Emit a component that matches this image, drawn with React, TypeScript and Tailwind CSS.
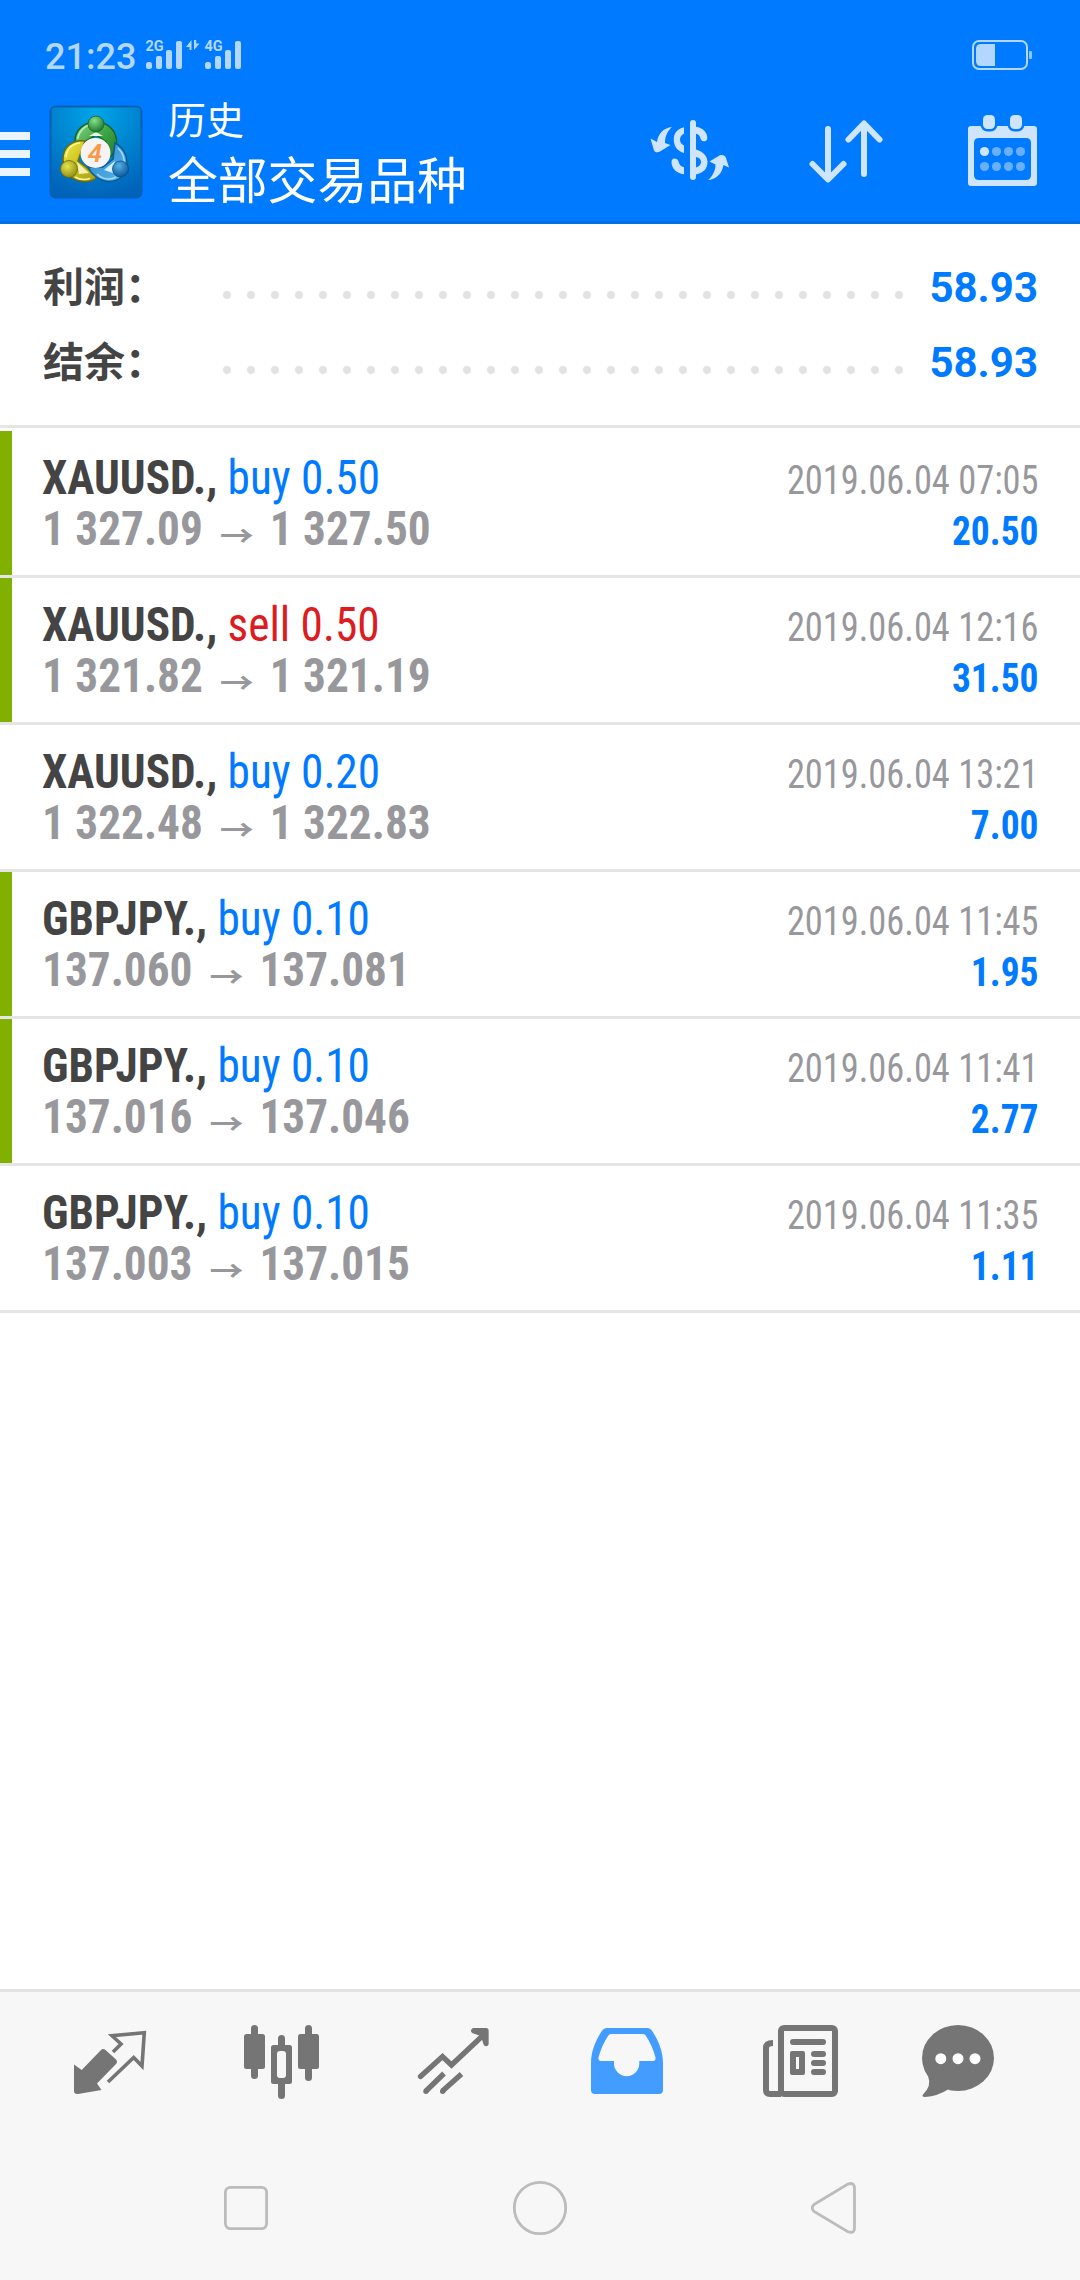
import type { ReactNode } from "react";

type Deal = {
  symbol: string;
  side: "buy" | "sell";
  volume: string;
  open: string;
  close: string;
  time: string;
  profit: string;
  marked: boolean;
};

const DEALS: Deal[] = [
  { symbol: "XAUUSD.", side: "buy", volume: "0.50", open: "1 327.09", close: "1 327.50", time: "2019.06.04 07:05", profit: "20.50", marked: true },
  { symbol: "XAUUSD.", side: "sell", volume: "0.50", open: "1 321.82", close: "1 321.19", time: "2019.06.04 12:16", profit: "31.50", marked: true },
  { symbol: "XAUUSD.", side: "buy", volume: "0.20", open: "1 322.48", close: "1 322.83", time: "2019.06.04 13:21", profit: "7.00", marked: false },
  { symbol: "GBPJPY.", side: "buy", volume: "0.10", open: "137.060", close: "137.081", time: "2019.06.04 11:45", profit: "1.95", marked: true },
  { symbol: "GBPJPY.", side: "buy", volume: "0.10", open: "137.016", close: "137.046", time: "2019.06.04 11:41", profit: "2.77", marked: true },
  { symbol: "GBPJPY.", side: "buy", volume: "0.10", open: "137.003", close: "137.015", time: "2019.06.04 11:35", profit: "1.11", marked: false },
];

const SUMMARY = [
  { label: "利润：", value: "58.93" },
  { label: "结余：", value: "58.93" },
];

function Signal({ label }: { label: string }) {
  return (
    <svg width="38" height="32" viewBox="0 0 38 32" fill="#b3d7ff">
      <text x="0.500" y="12" fontSize="14.500" fontWeight="700" fontFamily="Roboto, sans-serif">
        {label}
      </text>
      <rect x="1" y="23" width="6" height="7" rx="2.5" />
      <rect x="11" y="17" width="6" height="13" rx="2" />
      <rect x="21" y="11" width="6" height="19" rx="2" />
      <rect x="31" y="2" width="6" height="28" rx="2" />
    </svg>
  );
}

function StatusBar() {
  return (
    <div className="flex h-[92px] items-start pl-[45px] pr-[48px] pt-[36px] text-[#b3d7ff]">
      <span className="h-9 w-[100px] text-[36px] leading-[42px] font-medium">21:23</span>
      <div className="mt-[3px] flex">
        <Signal label="2G" />
        <svg className="ml-[3px]" width="16" height="32" viewBox="0 0 16 32" fill="#b3d7ff">
          <path d="M5.5 1v10H3.5V8H0l5.5-7zM8 1h2.200v3.500H13.500L8 11z" />
        </svg>
        <div className="ml-[2px]">
          <Signal label="4G" />
        </div>
      </div>
      <svg className="ml-auto mt-[4px]" width="60" height="30" viewBox="0 0 60 30">
        <rect x="1" y="1" width="54" height="28" rx="6" fill="none" stroke="#b3d7ff" strokeWidth="2" />
        <path d="M23 4v22H9q-5 0-5-5V9q0-5 5-5z" fill="#b3d7ff" />
        <rect x="57" y="11" width="3" height="8" rx="1" fill="#8cc6ff" />
      </svg>
    </div>
  );
}

function Logo() {
  return (
    <svg width="94" height="94" viewBox="0 0 94 94">
      <defs>
        <radialGradient id="tile" cx="50%" cy="8%" r="95%">
          <stop offset="0" stopColor="#00a5e8" />
          <stop offset="0.55" stopColor="#0080cd" />
          <stop offset="1" stopColor="#0062b8" />
        </radialGradient>
        <linearGradient id="green" x1="0" y1="0" x2="1" y2="1">
          <stop offset="0" stopColor="#8fd68a" />
          <stop offset="0.5" stopColor="#3ea645" />
          <stop offset="1" stopColor="#1e7a2c" />
        </linearGradient>
        <linearGradient id="yellow" x1="0" y1="0" x2="1" y2="1">
          <stop offset="0" stopColor="#f6ec4a" />
          <stop offset="0.5" stopColor="#c9c01c" />
          <stop offset="1" stopColor="#a8a014" />
        </linearGradient>
        <linearGradient id="blue" x1="0" y1="0" x2="1" y2="1">
          <stop offset="0" stopColor="#2a84c4" />
          <stop offset="1" stopColor="#58b8ee" />
        </linearGradient>
        <radialGradient id="ballGreen" cx="40%" cy="30%" r="70%">
          <stop offset="0" stopColor="#8ae08a" />
          <stop offset="1" stopColor="#1d7a30" />
        </radialGradient>
        <radialGradient id="ballYellow" cx="40%" cy="35%" r="70%">
          <stop offset="0" stopColor="#e8e44e" />
          <stop offset="1" stopColor="#8c8a10" />
        </radialGradient>
        <radialGradient id="ballBlue" cx="40%" cy="30%" r="70%">
          <stop offset="0" stopColor="#58b0e4" />
          <stop offset="1" stopColor="#0b5a9c" />
        </radialGradient>
      </defs>
      <rect x="1.500" y="1.500" width="91" height="91" rx="5" fill="url(#tile)" stroke="#0560b4" strokeWidth="2" />
      {/* upper arm */}
      <path d="M26 36C26 25 35 17 47 17C59 17 68 26 67.500 38C67 46 64 50 60 53L57 37L47 30L36 37L27 40Z" fill="url(#green)" stroke="#17642a" strokeWidth="1.500" />
      <path d="M28.500 34C30 26 36 20.500 42 19.500" fill="none" stroke="#b8ecae" strokeWidth="1.500" />
      <path d="M40 31L47 27L54 31Z" fill="#e4f7e0" />
      {/* left arm */}
      <path d="M36 36C24 34 14 42 14 54C14 68 24 77 38 76.500C43 76 46 74 48 72L37 62L29 56L33 44Z" fill="url(#yellow)" stroke="#6f6a12" strokeWidth="1.500" />
      <path d="M17 52C18 43 24 38.500 31 38M26 72C31 75 36 75 41 73.500" fill="none" stroke="#fbf79c" strokeWidth="1.500" />
      <path d="M28 57L40 68L30 69Z" fill="#f4f3b0" />
      {/* right arm */}
      <path d="M66 38C74 42 78 50 78 58C78 70 69 77 59 76.500C50 76 42 69 39 62L54 62L64 54Z" fill="url(#blue)" stroke="#0e5a98" strokeWidth="1.500" />
      <path d="M69 43C74 48 76 54 75 60M48 69C54 75 62 75 67 72" fill="none" stroke="#a6dcfa" strokeWidth="1.500" />
      <path d="M55 65L66 56L64 68Z" fill="#d6effc" />
      <circle cx="47" cy="19" r="8" fill="url(#ballGreen)" stroke="#17642a" strokeWidth="0.800" />
      <circle cx="20" cy="64" r="8.500" fill="url(#ballYellow)" stroke="#6f6a12" strokeWidth="0.800" />
      <circle cx="71.500" cy="64" r="8" fill="url(#ballBlue)" stroke="#0b4f88" strokeWidth="0.800" />
      <circle cx="46.500" cy="48" r="15" fill="#f6f4f3" />
      <text x="46" y="57" textAnchor="middle" fontSize="26" fontWeight="600" fontStyle="italic" fontFamily="Roboto, sans-serif" fill="#f59a4a">
        4
      </text>
    </svg>
  );
}

function AppBar() {
  return (
    <div className="flex h-[132px] items-start border-b-3 border-[#0070e6]">
      <div className="mt-[40px] flex w-[30px] flex-col gap-[10px]">
        <span className="h-2 bg-[#eaf4ff]" />
        <span className="h-2 bg-[#eaf4ff]" />
        <span className="h-2 bg-[#eaf4ff]" />
      </div>
      <div className="ml-[19px] mt-[13px]">
        <Logo />
      </div>
      <div className="ml-[25px] text-white">
        <div className="mt-[4px] h-[50px] text-[38px] leading-[50px]">历史</div>
        <div className="mt-[6px] h-[60px] text-[49.800px] leading-[60px]">全部交易品种</div>
      </div>
      <div className="ml-auto flex">
        <svg width="120" height="129" viewBox="630 92 120 129" fill="#cfe4fd">
          <rect x="690" y="120" width="6" height="60" rx="3" />
          <path d="M684 127.200C677 128.500 673.800 133.500 673.800 139.500C673.800 146.500 677.500 151 684 153V145.500C681 144 680 142 680 139.500C680 137 681.500 134.800 684 133.800Z" />
          <path d="M696 126.800C703 128 707.300 132.500 707.300 138C707.300 142.500 701.500 142.300 700.500 138.500C699.800 135.500 698.500 134.500 696 133.800Z" />
          <path fillRule="evenodd" d="M696 149.500C703.500 151.500 707.500 156.500 707.500 162C707.500 168.500 703.500 173 696 174.500ZM696 157V167.500C699.500 166.500 701 164.500 701 162C701 159.500 699.500 157.800 696 157Z" />
          <path d="M684 174.300C676 173 671.500 168 671.500 162C671.500 157.500 677.500 157.500 678.500 161.500C679.300 165 681 166.500 684 167.300Z" />
          <path d="M672 127C663 128 658 134 657 142L650.500 138.500L654 150.500C655.500 153 658 152.500 660 151.500L670.500 145L665 143C665 136 667.500 131 672 127Z" />
          <path d="M708 180C717 179 722 173.500 723.500 165L729 167.500L726 158C725 155 722 154.500 719.500 155.500L709.500 161.500L715.500 164.500C715.500 170 713 176 708 180Z" />
        </svg>
        <svg className="ml-[30px]" width="120" height="129" viewBox="780 92 120 129" fill="none" stroke="#cfe4fd" strokeWidth="6" strokeLinecap="round" strokeLinejoin="round">
          <path d="M828 129v50M812.500 164l15.500 15.500 15.500-15.500M864 174v-50M848.500 139.500L864 123.500 879.500 139.500" />
        </svg>
        <svg className="ml-[30px]" width="150" height="129" viewBox="930 92 150 129" fill="#cfe4fd">
          <path fillRule="evenodd" d="M973 126h61q3 0 3 3v54q0 3-3 3h-63q-3 0-3-3v-54q0-3 3-3zM979 138q-5 0-5 5v32q0 5 5 5h47q5 0 5-5v-32q0-5-5-5z" />
          <rect x="983" y="115" width="12" height="14" rx="4.500" stroke="#007aff" strokeWidth="5" paintOrder="stroke" />
          <rect x="1010" y="115" width="12" height="14" rx="4.500" stroke="#007aff" strokeWidth="5" paintOrder="stroke" />
          {[984.5, 996.5, 1008.5, 1020.5].map((x, i) => (
            <g key={x}>
              <circle cx={x} cy="151.500" r="4.600" opacity={i === 0 ? 1 : 0.5} />
              <circle cx={x} cy="166.500" r="4.600" opacity="0.500" />
            </g>
          ))}
        </svg>
      </div>
    </div>
  );
}

function SummaryRow({ label, value }: { label: string; value: string }) {
  return (
    <div className="flex h-[75px] items-center pl-[43px] pr-[42px] font-bold">
      <span className="w-[180px] pt-[4px] text-[41px] leading-[71px] text-[#444]">{label}</span>
      <div className="mt-[17px] flex gap-4">
        {Array.from({ length: 29 }, (_, i) => (
          <span key={i} className="size-2 rounded-full bg-[#e3e3e3]" />
        ))}
      </div>
      <span className="ml-auto pt-[3px] text-[42px] leading-[72px] text-[#007aff]">{value}</span>
    </div>
  );
}

function DealRow({ deal }: { deal: Deal }) {
  return (
    <div className="flex h-[147px] border-b-3 border-[#e5e5e5] [font-stretch:75%]">
      <div className={`w-3 ${deal.marked ? "bg-[#80b000]" : ""}`} />
      <div className="ml-[30px] origin-left scale-x-[0.943] pt-[21px] text-[48px] leading-[51px] whitespace-nowrap">
        <div className="h-[51px]">
          <span className="font-bold text-[#444]">{deal.symbol},</span>{" "}
          <span className={`font-[450] ${deal.side === "buy" ? "text-[#007aff]" : "text-[#dd1c22]"}`}>
            {deal.side} {deal.volume}
          </span>
        </div>
        <div className="flex h-[51px] font-bold text-[#98989c]">
          <span>{deal.open}</span>
          <span className="ml-[18px] mr-[17px] mt-[7px] scale-y-[0.8] font-['Noto_Sans_CJK_SC'] text-[36px]">→</span>
          <span>{deal.close}</span>
        </div>
      </div>
      <div className="ml-auto pr-[41px] pt-[24px] text-right text-[40px] leading-[51px]">
        <div className="origin-right scale-x-[0.91] font-[430] text-[#98989c]">{deal.time}</div>
        <div className="origin-right scale-x-[0.937] font-bold text-[#007aff]">{deal.profit}</div>
      </div>
    </div>
  );
}

function Tab({ children, active }: { children: ReactNode; active?: boolean }) {
  return (
    <button type="button" className={`flex-1 ${active ? "text-[#439cff]" : "text-[#757575]"}`}>
      <svg width="180" height="146" viewBox="0 0 180 146" fill="currentColor">
        {children}
      </svg>
    </button>
  );
}

function TabBar() {
  return (
    <div className="flex h-[149px] border-t-3 border-[#e3e3e3]">
      <Tab>
        <path d="M74 72.500L81.700 78L100.500 58.500Q103 56 105.500 58L116 67.500Q118 70 116 72L97 91.500L101.500 98L78 102Q74 102.500 74 99Z" />
        <path d="M113 60L121 52L112 43.700L144.300 40.700L142 74L133.700 65.500L108 90" fill="none" stroke="currentColor" strokeWidth="3.600" />
      </Tab>
      <Tab>
        <rect x="64" y="42" width="21" height="35" rx="2.500" />
        <rect x="71" y="33" width="7" height="54" rx="3.500" />
        <rect x="98" y="43" width="7" height="64" rx="3.500" />
        <rect x="91" y="53" width="21" height="39" rx="2.500" />
        <rect x="97" y="59" width="9" height="27" rx="3" fill="#f7f7f7" />
        <rect x="118" y="42" width="21" height="35" rx="2.500" />
        <rect x="125" y="33" width="7" height="56" rx="3.500" />
      </Tab>
      <Tab>
        <g fill="none" stroke="currentColor" strokeWidth="5.300">
          <path d="M60.500 84.500L82.500 64.500L91.500 73L125 41.500" strokeLinecap="round" />
          <path d="M113.700 38.700H126V51.500L123 42Z" strokeLinecap="round" strokeLinejoin="round" />
          <path d="M66 99L84 81.500M82.500 99L101.500 82" />
        </g>
        <circle cx="66" cy="99.300" r="2.700" />
        <circle cx="82.700" cy="99.300" r="2.700" />
      </Tab>
      <Tab active>
        <path fillRule="evenodd" d="M67 36H107Q110.500 36 112.500 39.500C119 49.500 123 60 123 71V98Q123 102 119 102H55Q51 102 51 98V71C51 60 55 49.500 61.500 39.500Q63.500 36 67 36ZM71 42Q69 42 68 44C63.500 51 60.500 58 58.500 65.500Q58 69 60.500 69H74V71.500A12.600 12.600 0 0 0 99.300 71.500V69H113.500Q116 69 115.500 65.500C113.500 58 110.500 51 106 44Q105 42 103 42Z" />
      </Tab>
      <Tab>
        <g fill="none" stroke="currentColor" strokeWidth="6">
          <rect x="61" y="36" width="54" height="66" rx="3" />
          <path d="M53 51Q46 51 46 56V98Q46 102 50 102H61" />
        </g>
        <rect x="70" y="47" width="36" height="6" rx="3" />
        <path fillRule="evenodd" d="M72 59h11q2 0 2 2v20q0 2-2 2h-11q-2 0-2-2v-20q0-2 2-2zM76 65v12h3v-12z" />
        <rect x="91" y="59" width="15" height="6" rx="3" />
        <rect x="91" y="68" width="15" height="6" rx="3" />
        <rect x="91" y="77" width="15" height="6" rx="3" />
      </Tab>
      <Tab>
        <ellipse cx="58" cy="66" rx="36" ry="33" />
        <path d="M28 84Q32 94 23 102.500Q21.500 105 25 105Q38 104 48 97.500Z" />
        <circle cx="40.800" cy="66.700" r="5.500" fill="#fff" />
        <circle cx="58" cy="66.700" r="5.500" fill="#fff" />
        <circle cx="75" cy="66.700" r="5.500" fill="#fff" />
      </Tab>
    </div>
  );
}

function NavBar() {
  return (
    <div className="flex h-[142px] items-center justify-center gap-[234px] pb-[2px]">
      <svg width="60" height="60" viewBox="0 0 60 60" fill="none" stroke="#bcbcbc" strokeWidth="2.800">
        <rect x="9.400" y="9.400" width="41.200" height="41.200" rx="5" />
      </svg>
      <svg width="60" height="60" viewBox="0 0 60 60" fill="none" stroke="#bcbcbc" strokeWidth="2.800">
        <circle cx="30" cy="30" r="25.700" />
      </svg>
      <svg width="60" height="60" viewBox="0 0 60 60" fill="none" stroke="#bcbcbc" strokeWidth="2.800">
        <path d="M10 26.500L43.500 6.300Q50.500 3.500 50.500 10.500V49.500Q50.500 56.500 43.500 53.500L10 33.500Q6.500 30 10 26.500Z" />
      </svg>
    </div>
  );
}

export default function App() {
  return (
    <div className="flex h-[2280px] w-[1080px] flex-col overflow-hidden bg-white font-['Roboto','Noto_Sans_CJK_SC',sans-serif]">
      <header className="h-[224px] bg-[#007aff]">
        <StatusBar />
        <AppBar />
      </header>
      <section className="h-[204px] border-b-3 border-[#e5e5e5] pt-[25px]">
        {SUMMARY.map((row) => (
          <SummaryRow key={row.label} {...row} />
        ))}
      </section>
      <main className="flex-1 pt-[3px]">
        {DEALS.map((deal) => (
          <DealRow key={deal.time} deal={deal} />
        ))}
      </main>
      <footer className="bg-[#f7f7f7]">
        <TabBar />
        <NavBar />
      </footer>
    </div>
  );
}
